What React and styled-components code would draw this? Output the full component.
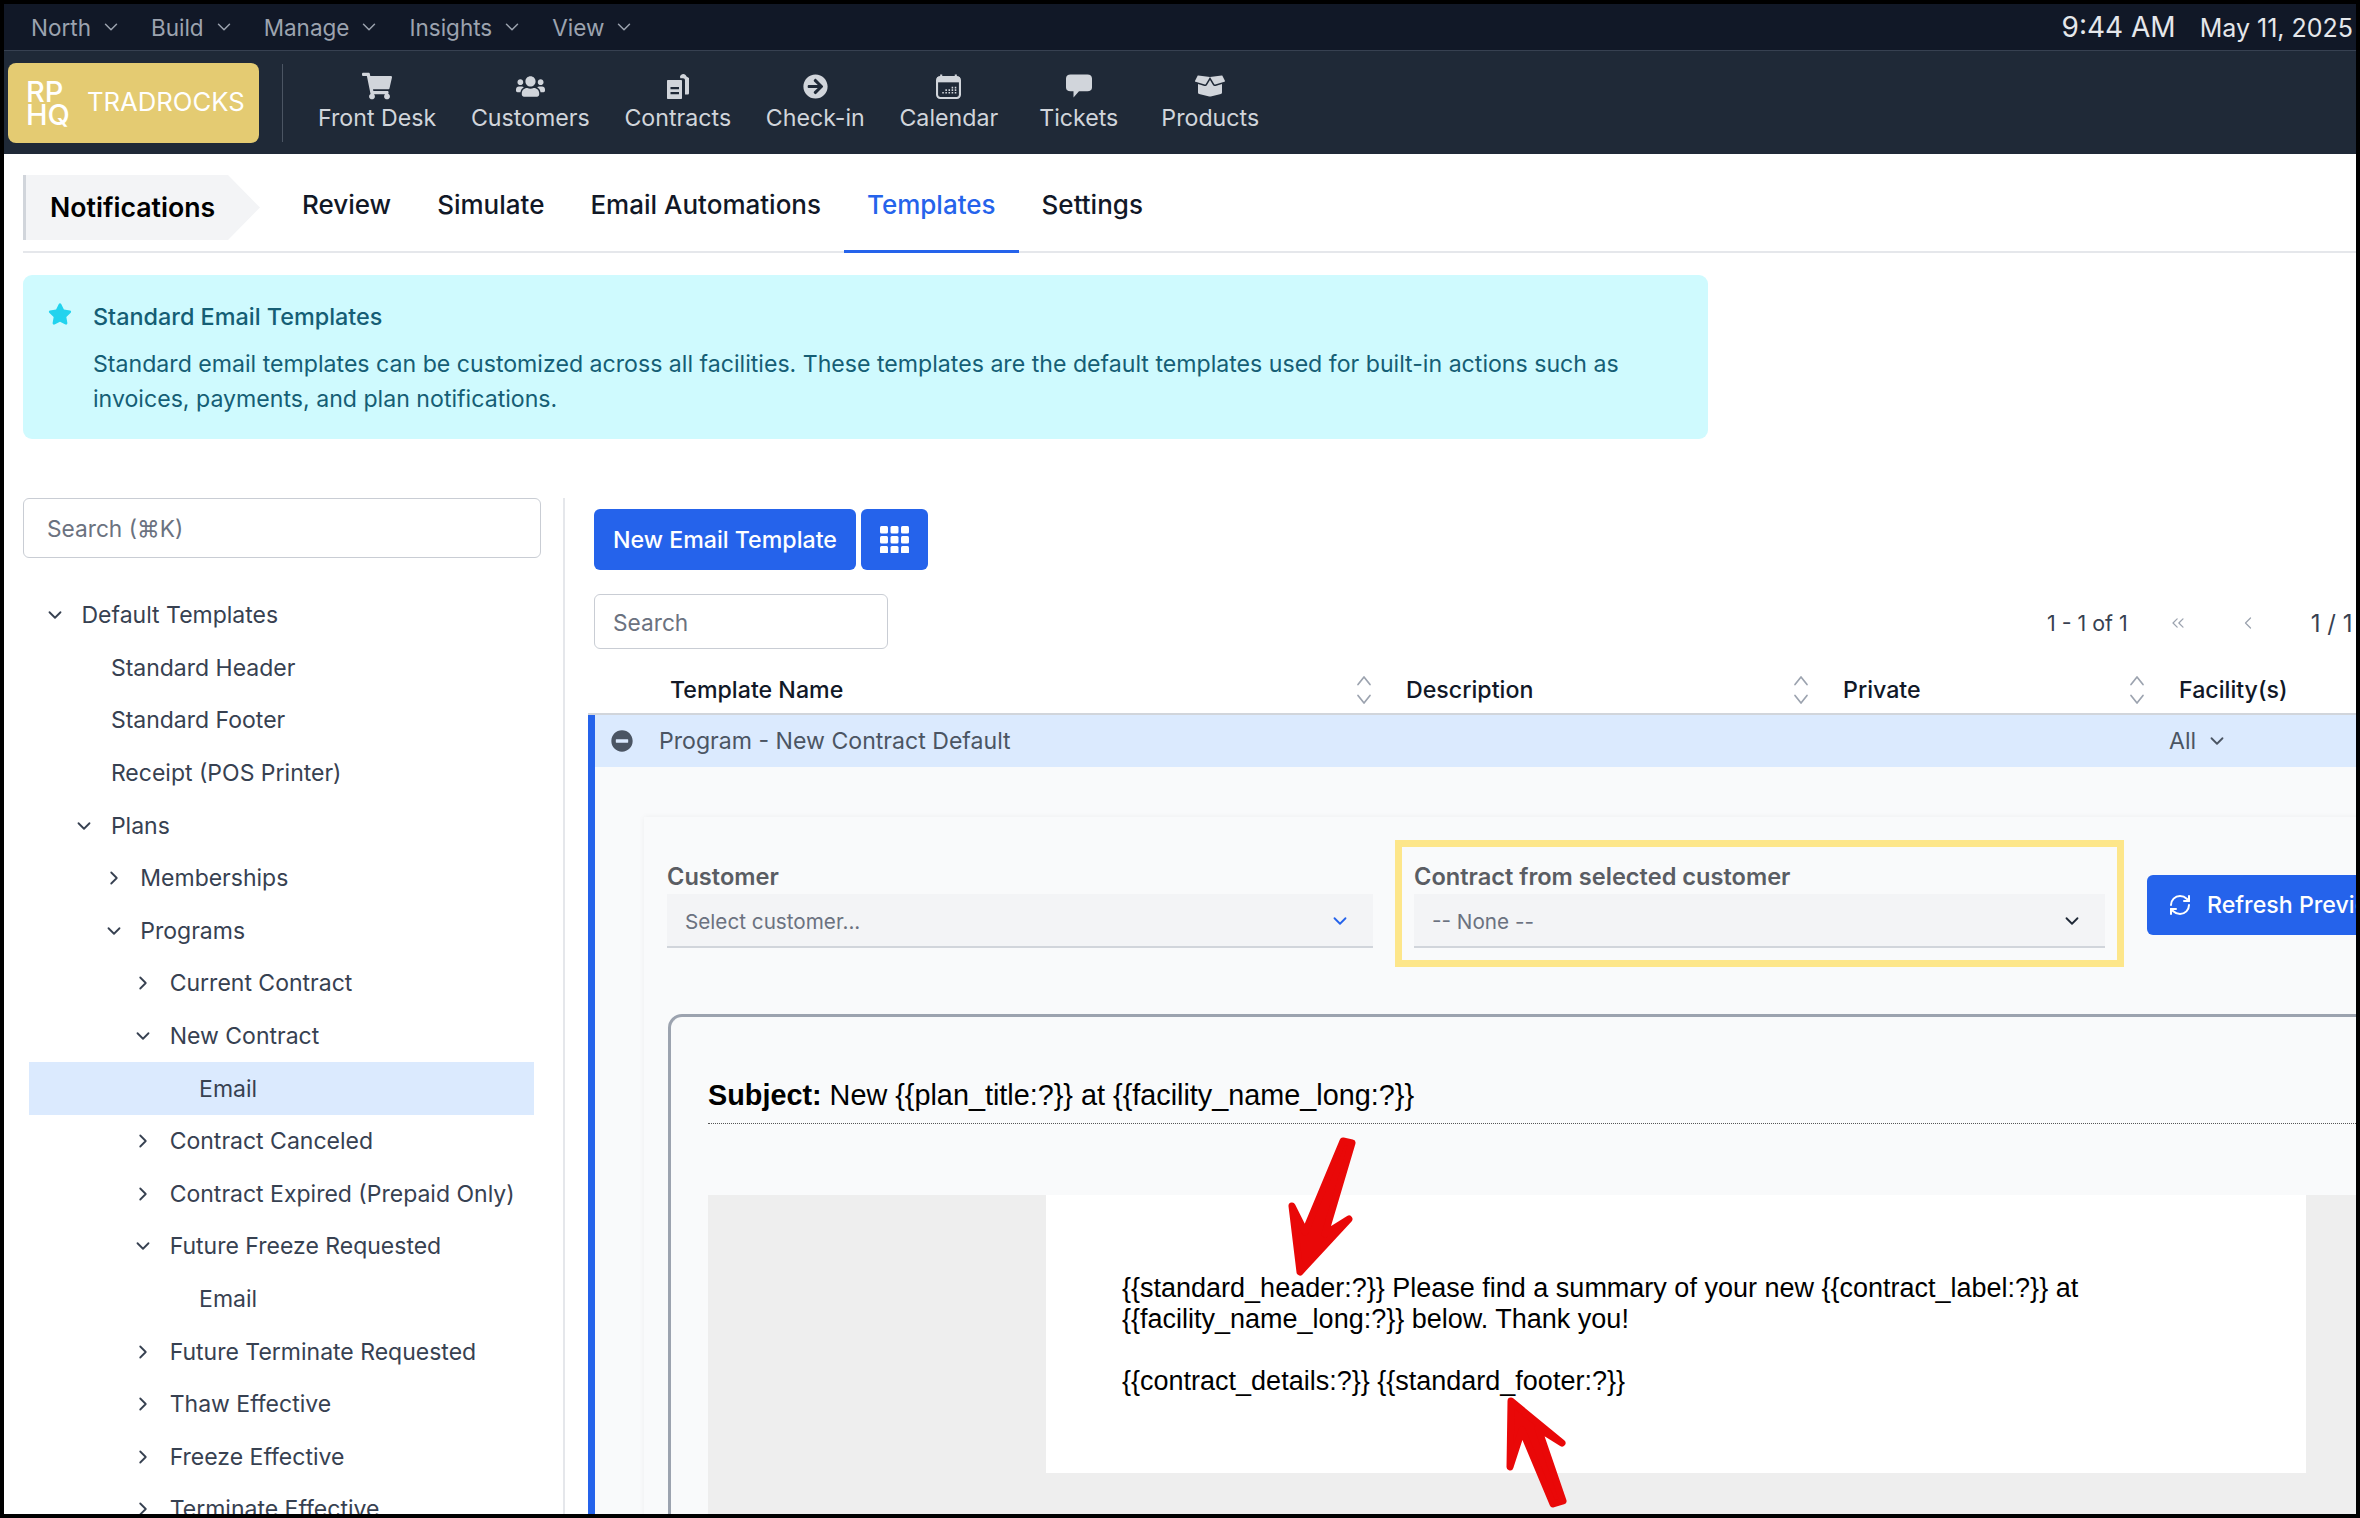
import React from 'react';
import styled, { createGlobalStyle } from 'styled-components';
import { FaShoppingCart, FaUsers, FaArrowCircleRight, FaBoxOpen, FaStar, FaMinusCircle } from 'react-icons/fa';
import { ChevronDown, ChevronRight, ChevronsLeft, ChevronLeft, RefreshCw } from 'lucide-react';

const GlobalStyle = createGlobalStyle`
  html, body {
    margin: 0;
    padding: 0;
    background: #000;
  }
  * {
    box-sizing: border-box;
  }
`;

const Frame = styled.div`
  width: 2360px;
  height: 1518px;
  padding: 4px;
  background: #000;
  font-family: Inter, "Noto Sans", sans-serif;
`;

const Screen = styled.div`
  position: relative;
  width: 2352px;
  height: 1510px;
  background: #fff;
  overflow: hidden;
`;

const TopBar = styled.div`
  height: 47px;
  background: #111827;
  border-bottom: 1px solid #374151;
  display: flex;
  align-items: center;
  padding-left: 27px;
`;

const TopMenu = styled.div`
  display: flex;
  align-items: center;
  gap: 9px;
  margin-right: 29px;
  color: #9ca3af;
  font-size: 22.5px;
`;

const Clock = styled.div`
  margin-left: auto;
  display: flex;
  align-items: baseline;
  gap: 24px;
  padding-right: 3px;
  color: #e5e7eb;
`;

const Time = styled.span`
  font-size: 28px;
`;

const DateText = styled.span`
  font-size: 25px;
`;

const NavBar = styled.div`
  height: 103px;
  background: #1f2937;
  display: flex;
  align-items: center;
  padding-left: 4px;
`;

const Logo = styled.div`
  width: 251px;
  height: 80px;
  border-radius: 8px;
  background: #e4cb72;
  color: #fff;
  display: flex;
  align-items: center;
  padding-left: 18px;
  gap: 17px;
`;

const LogoMark = styled.div`
  font-size: 29px;
  line-height: 23px;
  font-weight: 500;
`;

const LogoName = styled.div`
  font-size: 25.7px;
  margin-bottom: 2px;
`;

const NavDivider = styled.div`
  width: 1px;
  height: 78px;
  margin: 0 35px 0 23px;
  background: #4b5563;
`;

const NavItem = styled.div`
  display: flex;
  flex-direction: column;
  align-items: center;
  gap: 5px;
  margin-right: ${({ $gap }) => $gap}px;
  color: #d1d5db;
  font-size: 23.2px;
  line-height: 28px;
`;

const NavIcon = styled.div`
  height: 26px;
  display: flex;
  align-items: center;
  color: #d1d5db;
`;

const SubNav = styled.div`
  height: 81px;
  margin: 18px 0 0 19px;
  border-bottom: 2px solid #e5e7eb;
  display: flex;
  align-items: flex-start;
`;

const Crumb = styled.div`
  width: 237px;
  height: 65px;
  margin-top: 3px;
  margin-right: 19px;
  padding: 0 0 2px 24px;
  background: #f3f4f6;
  clip-path: polygon(0 0, 205px 0, 100% 50%, 205px 100%, 0 100%);
  border-left: 3px solid #d1d5db;
  display: flex;
  align-items: center;
  font-size: 26.7px;
  font-weight: 600;
  color: #000;
`;

const Tab = styled.div`
  height: 81px;
  padding: 0 23px 14px;
  display: flex;
  align-items: center;
  font-size: 26px;
  font-weight: 500;
  color: ${({ $active }) => ($active ? '#2563eb' : '#111827')};
  border-bottom: 3px solid ${({ $active }) => ($active ? '#2563eb' : 'transparent')};
`;

const Banner = styled.div`
  width: 1685px;
  height: 164px;
  margin: 22px 0 59px 19px;
  padding: 27px 60px 0 25px;
  background: #cffafe;
  border-radius: 9px;
  display: flex;
  gap: 21px;
  color: #155e75;
`;

const BannerIcon = styled.div`
  color: #22d3ee;
  font-size: 24px;
  line-height: 24px;
  height: 24px;
`;

const BannerTitle = styled.div`
  font-size: 23.4px;
  font-weight: 500;
  line-height: 30px;
  margin-bottom: 15px;
`;

const BannerText = styled.div`
  font-size: 23.13px;
  line-height: 35px;
`;

const Columns = styled.div`
  display: flex;
  align-items: flex-start;
`;

const Side = styled.div`
  width: 561px;
  height: 1100px;
  padding-left: 19px;
  border-right: 2px solid #e5e7eb;
  flex-shrink: 0;
`;

const SearchBox = styled.div`
  width: ${({ $width }) => $width}px;
  height: ${({ $height }) => $height}px;
  border: 1px solid #c9cdd4;
  border-radius: 6px;
  display: flex;
  align-items: center;
  padding-left: ${({ $pad }) => $pad}px;
  padding-top: ${({ $top }) => $top || 0}px;
  color: #6b7280;
  font-size: 22.7px;
  flex-shrink: 0;
  background: #fff;
`;

const Tree = styled.div`
  margin-top: 31px;
`;

const TreeRow = styled.div`
  height: 52.6px;
  width: 505px;
  margin-left: 6px;
  display: flex;
  align-items: center;
  padding-left: ${({ $level }) => 52.5 + $level * 29.4}px;
  position: relative;
  color: #374151;
  font-size: 23px;
  background: ${({ $selected }) => ($selected ? '#dbeafe' : 'transparent')};
`;

const TreeChevron = styled.span`
  position: absolute;
  left: ${({ $level }) => 15 + $level * 29.4}px;
  display: flex;
  color: #374151;
`;

const Main = styled.div`
  padding: 11px 0 0 29px;
  flex-shrink: 0;
`;

const ButtonRow = styled.div`
  display: flex;
  gap: 5px;
`;

const PrimaryButton = styled.div`
  height: 61px;
  padding: 0 19px;
  border-radius: 6px;
  background: #2563eb;
  color: #fff;
  display: flex;
  align-items: center;
  font-size: 23.2px;
  font-weight: 500;
`;

const SearchRow = styled.div`
  display: flex;
  align-items: center;
  margin-top: 24px;
  white-space: nowrap;
`;

const Pager = styled.div`
  display: flex;
  align-items: center;
  margin-left: 1159px;
  padding-top: 3px;
  color: #374151;
  font-size: 21.4px;
`;

const PagerIcon = styled.span`
  display: flex;
  color: #9ca3af;
  margin-left: ${({ $left }) => $left}px;
`;

const PagerCount = styled.span`
  margin-left: 53px;
  font-size: 24px;
`;

const TableHead = styled.div`
  width: 1800px;
  height: 66px;
  margin-left: -6px;
  padding-top: 17px;
  border-bottom: 2px solid #d1d5db;
  display: grid;
  grid-template-columns: 82px 736px 437px 336px 1fr;
  align-items: center;
`;

const HeadCell = styled.div`
  display: flex;
  align-items: center;
  justify-content: space-between;
  padding-right: 34px;
  font-size: 23.2px;
  font-weight: 500;
  color: #111827;
`;

const Row = styled.div`
  width: 1800px;
  height: 52px;
  margin-left: -6px;
  padding-left: 16px;
  background: #dbeafe;
  border-left: 7px solid #2563eb;
  display: flex;
  align-items: center;
  color: #4b5563;
  font-size: 23.1px;
`;

const RowName = styled.span`
  width: 1510px;
  margin-left: 26px;
`;

const RowFacility = styled.span`
  display: flex;
  align-items: center;
  gap: 10px;
`;

const Detail = styled.div`
  width: 1800px;
  height: 800px;
  margin-left: -6px;
  padding: 50px 0 0 49px;
  background: #f9fafb;
  border-left: 7px solid #2563eb;
`;

const Card = styled.div`
  width: 1750px;
  height: 800px;
  padding: 23px 0 0 23px;
  background: #f9fafb;
  box-shadow: 0 0 6px rgba(0, 0, 0, 0.05);
`;

const Filters = styled.div`
  display: flex;
  align-items: flex-start;
`;

const Field = styled.div`
  width: ${({ $width }) => $width}px;
  margin-top: ${({ $top }) => $top}px;
  flex-shrink: 0;
`;

const FieldLabel = styled.div`
  height: 31px;
  line-height: 28px;
  color: #5a5d63;
  font-size: 23.6px;
  font-weight: 600;
`;

const Select = styled.div`
  height: 54px;
  padding: 2px 22px 0 18px;
  background: #f3f4f6;
  border-bottom: 2px solid #d1d5db;
  display: flex;
  align-items: center;
  justify-content: space-between;
  color: #6b7280;
  font-size: 20.7px;
`;

const ChevronWrap = styled.span`
  display: flex;
  color: ${({ $color }) => $color};
`;

const Highlight = styled.div`
  width: 729px;
  margin-left: 22px;
  padding: 16px 12px 12px;
  border: 7px solid #fde68a;
  flex-shrink: 0;
`;

const RefreshButton = styled.div`
  width: 320px;
  height: 60px;
  margin: 35px 0 0 23px;
  padding-left: 21px;
  flex-shrink: 0;
  border-radius: 6px;
  background: #2563eb;
  color: #fff;
  display: flex;
  align-items: center;
  gap: 15px;
  font-size: 23.2px;
  font-weight: 500;
  white-space: nowrap;
`;

const Preview = styled.div`
  width: 1720px;
  height: 600px;
  margin: 47px 0 0 1px;
  padding: 0 0 0 37px;
  border-top: 3px solid #9ca3af;
  border-left: 3px solid #9ca3af;
  border-top-left-radius: 14px;
  font-family: "Liberation Sans", Arial, sans-serif;
  color: #000;
`;

const Subject = styled.div`
  height: 107px;
  padding-top: 63px;
  border-bottom: 1px dotted #555;
  font-size: 28.8px;
  line-height: 30px;
  white-space: nowrap;
`;

const EmailCanvas = styled.div`
  height: 400px;
  margin-top: 71px;
  padding-left: 338px;
  background: #eee;
`;

const EmailBody = styled.div`
  width: 1260px;
  height: 278px;
  padding: 78px 0 0 76px;
  background: #fff;
  font-size: 27px;
  line-height: 31px;
  white-space: nowrap;
`;

const Arrows = styled.svg`
  position: absolute;
  left: 0;
  top: 0;
  pointer-events: none;
`;

const menus = ['North', 'Build', 'Manage', 'Insights', 'View'];

const ContractsIcon = () => (
  <svg width="24" height="26" viewBox="0 0 24 26" fill="#d1d5db">
    <path d="M14 3.5c.5-1.6 1.8-2.5 3.300-2.500 1.500 0 2.700 1 3.200 2.500L23 5v15c0 1-.6 1.600-1.500 1.600h-2.500V7.200c0-1.100-.8-2-2-2h-2.700z" />
    <path fillRule="evenodd" d="M2 7h13c.6 0 1 .4 1 1v17c0 .6-.4 1-1 1H2c-.6 0-1-.4-1-1V8c0-.6.4-1 1-1zm2.500 7v2.300h8.500V14zm0 5v2.300h8.500V19z" />
  </svg>
);

const CalendarIcon = () => (
  <svg width="25" height="25" viewBox="0 0 24 24" fill="none">
    <rect x="1" y="3" width="22" height="20" rx="3" stroke="#d1d5db" strokeWidth="2" />
    <rect x="1" y="3" width="22" height="5" fill="#d1d5db" />
    <path d="M5 0.500v4M19 0.500v4" stroke="#d1d5db" strokeWidth="2" />
    <path d="M6 18h1.500M9 18h1.500M12 18h1.500M15 18h1.500M18 18h1.500M9 15.500h1.500M12 15.500h1.500M15 15.500h1.500M18 15.500h1.500M15 13h1.500M18 13h1.500" stroke="#d1d5db" strokeWidth="1.600" />
  </svg>
);

const TicketIcon = () => (
  <svg width="28" height="24" viewBox="0 0 27 24" fill="#d1d5db">
    <path d="M5 0.500h17c2.700 0 4.500 1.500 4.500 4v9c0 2.500-1.800 3.800-4.500 3.800h-8.500L8 23.500v-6.200H5c-2.700 0-4.500-1.300-4.500-3.800v-9c0-2.500 1.800-4 4.500-4z" />
  </svg>
);

const GridIcon = () => (
  <svg width="29" height="27" viewBox="0 0 29 27" fill="#fff">
    {[0, 10, 20].map((y) =>
      [0, 10.500, 21].map((x) => <rect key={`${x}-${y}`} x={x} y={y} width="8" height="7.500" rx="1.500" />)
    )}
  </svg>
);

const SortIcon = () => (
  <svg width="16" height="30" viewBox="0 0 16 30" fill="none" stroke="#9ca3af" strokeWidth="1.700" strokeLinecap="round" strokeLinejoin="round">
    <path d="M2 9.500L8 2l6 7.500" />
    <path d="M2 20.500L8 28l6-7.500" />
  </svg>
);

const navItems = [
  { label: 'Front Desk', icon: <FaShoppingCart size={30} />, gap: 34.6 },
  { label: 'Customers', icon: <FaUsers size={29} />, gap: 34.6 },
  { label: 'Contracts', icon: <ContractsIcon />, gap: 34.6 },
  { label: 'Check-in', icon: <FaArrowCircleRight size={25} />, gap: 34.6 },
  { label: 'Calendar', icon: <CalendarIcon />, gap: 41 },
  { label: 'Tickets', icon: <TicketIcon />, gap: 43 },
  { label: 'Products', icon: <FaBoxOpen size={30} />, gap: 0 },
];

const tabs = ['Review', 'Simulate', 'Email Automations', 'Templates', 'Settings'];

const tree = [
  { label: 'Default Templates', level: 0, open: true },
  { label: 'Standard Header', level: 1 },
  { label: 'Standard Footer', level: 1 },
  { label: 'Receipt (POS Printer)', level: 1 },
  { label: 'Plans', level: 1, open: true },
  { label: 'Memberships', level: 2, open: false },
  { label: 'Programs', level: 2, open: true },
  { label: 'Current Contract', level: 3, open: false },
  { label: 'New Contract', level: 3, open: true },
  { label: 'Email', level: 4, selected: true },
  { label: 'Contract Canceled', level: 3, open: false },
  { label: 'Contract Expired (Prepaid Only)', level: 3, open: false },
  { label: 'Future Freeze Requested', level: 3, open: true },
  { label: 'Email', level: 4 },
  { label: 'Future Terminate Requested', level: 3, open: false },
  { label: 'Thaw Effective', level: 3, open: false },
  { label: 'Freeze Effective', level: 3, open: false },
  { label: 'Terminate Effective', level: 3, open: false },
];

const columns = ['Template Name', 'Description', 'Private', 'Facility(s)'];

export default function App() {
  return (
    <Frame>
      <GlobalStyle />
      <Screen>
        <TopBar>
          {menus.map((label) => (
            <TopMenu key={label}>
              {label}
              <ChevronDown size={22} strokeWidth={1.6} />
            </TopMenu>
          ))}
          <Clock>
            <Time>9:44 AM</Time>
            <DateText>May 11, 2025</DateText>
          </Clock>
        </TopBar>

        <NavBar>
          <Logo>
            <LogoMark>RP<br />HQ</LogoMark>
            <LogoName>TRADROCKS</LogoName>
          </Logo>
          <NavDivider />
          {navItems.map((item) => (
            <NavItem key={item.label} $gap={item.gap}>
              <NavIcon>{item.icon}</NavIcon>
              {item.label}
            </NavItem>
          ))}
        </NavBar>

        <SubNav>
          <Crumb>Notifications</Crumb>
          {tabs.map((t) => (
            <Tab key={t} $active={t === 'Templates'}>{t}</Tab>
          ))}
        </SubNav>

        <Banner>
          <BannerIcon><FaStar /></BannerIcon>
          <div>
            <BannerTitle>Standard Email Templates</BannerTitle>
            <BannerText>
              Standard email templates can be customized across all facilities. These templates are the default templates used for built-in actions such as invoices, payments, and plan notifications.
            </BannerText>
          </div>
        </Banner>

        <Columns>
          <Side>
            <SearchBox $width={518} $height={60} $pad={23}>Search (⌘K)</SearchBox>
            <Tree>
              {tree.map((node, i) => (
                <TreeRow key={i} $level={node.level} $selected={node.selected}>
                  {node.open !== undefined && (
                    <TreeChevron $level={node.level}>
                      {node.open ? <ChevronDown size={22} strokeWidth={2} /> : <ChevronRight size={22} strokeWidth={2} />}
                    </TreeChevron>
                  )}
                  {node.label}
                </TreeRow>
              ))}
            </Tree>
          </Side>

          <Main>
            <ButtonRow>
              <PrimaryButton>New Email Template</PrimaryButton>
              <PrimaryButton><GridIcon /></PrimaryButton>
            </ButtonRow>
            <SearchRow>
              <SearchBox $width={294} $height={55} $pad={18} $top={2}>Search</SearchBox>
              <Pager>
                1 - 1 of 1
                <PagerIcon $left={40}><ChevronsLeft size={20} strokeWidth={1.5} /></PagerIcon>
                <PagerIcon $left={50}><ChevronLeft size={20} strokeWidth={1.5} /></PagerIcon>
                <PagerCount>1 / 1</PagerCount>
              </Pager>
            </SearchRow>

            <TableHead>
              <span />
              {columns.map((c) => (
                <HeadCell key={c}>
                  {c}
                  {c !== 'Facility(s)' && <SortIcon />}
                </HeadCell>
              ))}
            </TableHead>

            <Row>
              <FaMinusCircle size={22} />
              <RowName>Program - New Contract Default</RowName>
              <RowFacility>All <ChevronDown size={22} strokeWidth={2} /></RowFacility>
            </Row>

            <Detail>
              <Card>
                <Filters>
                  <Field $width={706} $top={23}>
                    <FieldLabel>Customer</FieldLabel>
                    <Select>
                      Select customer...
                      <ChevronWrap $color="#2563eb"><ChevronDown size={22} strokeWidth={2} /></ChevronWrap>
                    </Select>
                  </Field>
                  <Highlight>
                    <FieldLabel>Contract from selected customer</FieldLabel>
                    <Select>
                      -- None --
                      <ChevronWrap $color="#1f2937"><ChevronDown size={22} strokeWidth={2} /></ChevronWrap>
                    </Select>
                  </Highlight>
                  <RefreshButton><RefreshCw size={24} strokeWidth={2} />Refresh Preview</RefreshButton>
                </Filters>

                <Preview>
                  <Subject><b>Subject:</b> New {'{{plan_title:?}}'} at {'{{facility_name_long:?}}'}</Subject>
                  <EmailCanvas>
                    <EmailBody>
                      {'{{standard_header:?}}'} Please find a summary of your new {'{{contract_label:?}}'} at<br />
                      {'{{facility_name_long:?}}'} below. Thank you!<br />
                      <br />
                      {'{{contract_details:?}}'} {'{{standard_footer:?}}'}
                    </EmailBody>
                  </EmailCanvas>
                </Preview>
              </Card>
            </Detail>
          </Main>
        </Columns>

        <Arrows width="2352" height="1510" viewBox="4 4 2352 1510" fill="#e90808" stroke="#e90808" strokeWidth="7" strokeLinejoin="round">
          <path d="M1343 1141L1352 1143L1325 1234L1349 1219L1300 1272L1292 1206L1305 1232z" />
          <path d="M1511 1401L1562 1443L1538 1428L1563 1501L1553 1504L1522 1430L1510 1467z" />
        </Arrows>
      </Screen>
    </Frame>
  );
}
